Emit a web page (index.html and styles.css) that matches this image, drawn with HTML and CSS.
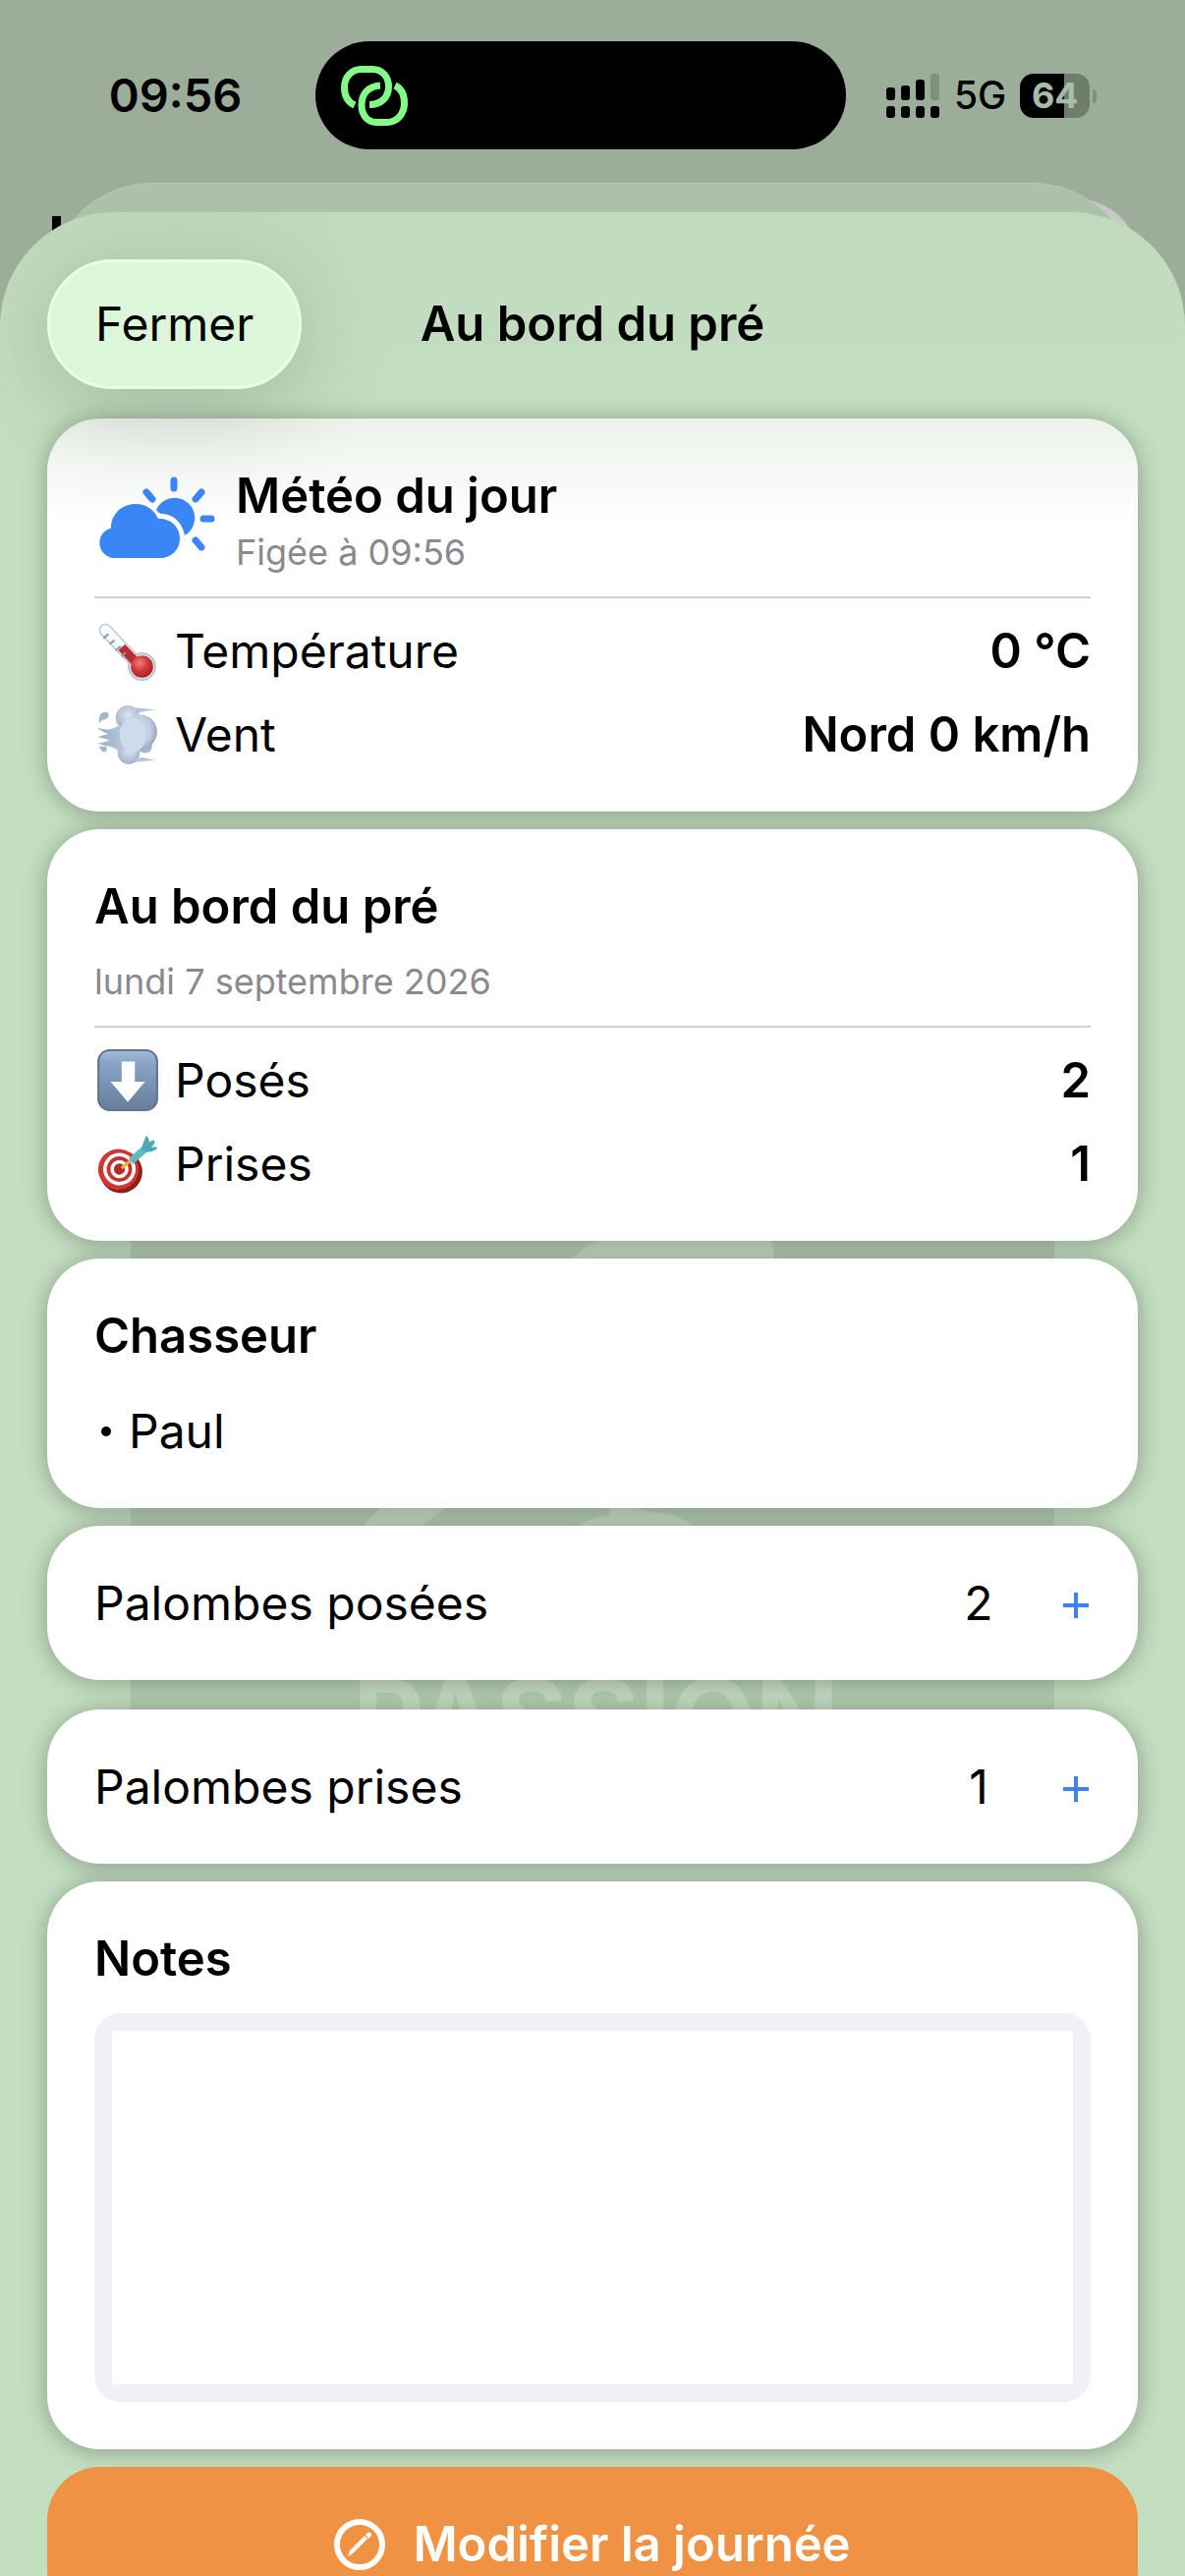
FILE: index.html
```html
<!DOCTYPE html>
<html lang="fr">
<head>
<meta charset="utf-8">
<meta name="viewport" content="width=device-width, initial-scale=1">
<title>Au bord du pré</title>
<link rel="stylesheet" href="styles.css">
</head>
<body>
<div class="backdrop">
  <header class="status">
    <time class="clock">09:56</time>
    <div class="island">
      <svg class="link-icon" viewBox="0 0 68 61" aria-hidden="true">
        <g fill="none" stroke="#83fb86" stroke-width="7" stroke-linejoin="round">
          <path d="M14 40C7 37 3.500 30 3.500 22C3.500 11 11 3.500 21 3.500H32C42 3.500 48.500 11 48.500 21C48.500 32 41 39.500 29 39.500"/>
          <path d="M55 20C61.500 23 64.500 30 64.500 38C64.500 49 57 57.500 47 57.500H36C26 57.500 21 49 21 40C21 28 28 21 40 20"/>
        </g>
      </svg>
    </div>
    <div class="signals">
      <svg class="bars" viewBox="0 0 55 45" aria-hidden="true">
        <rect x="0" y="14" width="9" height="13" rx="3"/><rect x="15" y="12" width="9" height="15" rx="3"/><rect x="30" y="6" width="9" height="21" rx="3"/><rect x="45" y="0" width="9" height="27" rx="3" fill="#7f917d"/>
        <rect x="0" y="33" width="9" height="12" rx="3"/><rect x="15" y="33" width="9" height="12" rx="3"/><rect x="30" y="33" width="9" height="12" rx="3"/><rect x="45" y="33" width="9" height="12" rx="3"/>
      </svg>
      <span class="network">5G</span>
      <span class="battery">64</span>
    </div>
  </header>
  <div class="page-behind"><span class="stub"></span><span class="avatar"></span></div>
  <div class="sheet-behind"></div>
</div>

<main class="sheet">
  <svg class="watermark" viewBox="0 0 940 940" aria-hidden="true">
    <rect width="940" height="940" fill="#b4ceb2"/>
    <g fill="#c6dcc3">
      <path d="M445 335L470 315Q560 255 640 280Q655 310 656 345L650 420H360Z"/>
      <path d="M290 560L253 587L228 612H286L325 582L345 560Z"/>
      <path d="M485 580L488 593Q462 596 450 610V620H585Q570 595 545 592Q525 590 505 583Z"/>
      <text x="226" y="841" font-size="112" font-weight="700">PASSION</text>
    </g>
  </svg>
  <div class="nav">
    <button class="close" type="button">Fermer</button>
    <h1 class="title">Au bord du pré</h1>
  </div>

  <section class="card weather">
    <div class="weather-head">
      <svg class="weather-icon" viewBox="0 0 120 84" aria-hidden="true">
        <g fill="none" stroke="#3b86f7" stroke-width="7" stroke-linecap="round">
          <path d="M77 4V12M49 16L55 23M105 16L99 23M107 43H115M99 65L105 72"/>
        </g>
        <path fill="#3b86f7" d="M59 34A20.500 20.500 0 1 1 88 60C86 48 77 38 64 38Q61 37 59 34Z"/>
        <path fill="#3b86f7" d="M16 83A15.500 15.500 0 0 1 13 52.500C13 38 24 28 38 28C49 28 57 34 61 43C74 42 83 52 83 63C83 75 74 83 63 83Z"/>
      </svg>
      <div class="weather-titles">
        <h2 class="heading">Météo du jour</h2>
        <p class="caption">Figée à 09:56</p>
      </div>
    </div>
    <hr class="rule">
    <dl class="facts">
      <div class="fact">
        <dt><svg class="emoji" viewBox="0 0 64 64" aria-hidden="true">
          <defs>
            <radialGradient id="bulb" cx=".4" cy=".35" r=".7"><stop offset="0" stop-color="#f08078"/><stop offset=".5" stop-color="#d13a3a"/><stop offset="1" stop-color="#9c2226"/></radialGradient>
          </defs>
          <path d="M11 11L46 48" stroke="#bccbd6" stroke-width="13" stroke-linecap="round"/>
          <path d="M11 11L46 48" stroke="#f6fafc" stroke-width="10" stroke-linecap="round"/>
          <circle cx="47" cy="47" r="13" fill="#dfe7ee" stroke="#b9c6d2" stroke-width="2"/>
          <path d="M27 28L46 48" stroke="#b92e2e" stroke-width="9"/>
          <circle cx="47" cy="47" r="11" fill="url(#bulb)"/>
          <path d="M9 19L14 15M15 25L20 21M21 31L26 27M27 37L31 33" stroke="#8e979e" stroke-width="2"/>
        </svg>Température</dt>
        <dd>0 °C</dd>
      </div>
      <div class="fact">
        <dt><svg class="emoji" viewBox="0 0 64 64" aria-hidden="true">
          <defs>
            <radialGradient id="puff-top" cx=".5" cy=".4" r=".6"><stop offset="0" stop-color="#d9e4f1"/><stop offset="1" stop-color="#a3b3cb"/></radialGradient>
            <radialGradient id="puff-mid" cx=".4" cy=".45" r=".6"><stop offset="0" stop-color="#d5e0ee"/><stop offset=".7" stop-color="#c0cee1"/><stop offset="1" stop-color="#96a7c1"/></radialGradient>
            <linearGradient id="trail" x1="0" y1="0" x2="1" y2="0"><stop offset="0" stop-color="#9aabc4"/><stop offset="1" stop-color="#cbd8e8"/></linearGradient>
          </defs>
          <path d="M40 5L60 7L44 10ZM46 54L60 57L40 59Z" fill="#b9c5d6"/>
          <path d="M5 21C3 13 8 8 13 10C16 13 13 17 9 17Q6 18 5 21ZM5 43Q6 49 11 49Q14 46 11 43Q8 44 5 43Z" fill="#a6b6cb"/>
          <circle cx="33" cy="15" r="12" fill="url(#puff-top)"/>
          <circle cx="34" cy="50" r="11" fill="url(#puff-top)"/>
          <circle cx="50" cy="43" r="7" fill="#a3b3cb"/>
          <circle cx="45" cy="29" r="17" fill="url(#puff-mid)"/>
          <path d="M3 25Q15 29 24 23L44 20V42L25 49C18 42 12 44 3 40Q10 40 15 37L3 34L14 31Q7 29 3 25Z" fill="url(#trail)"/>
          <ellipse cx="38" cy="32" rx="13" ry="17" fill="#cfdbea"/>
        </svg>Vent</dt>
        <dd>Nord 0 km/h</dd>
      </div>
    </dl>
  </section>

  <section class="card">
    <h2 class="heading">Au bord du pré</h2>
    <p class="caption date">lundi 7 septembre 2026</p>
    <hr class="rule">
    <dl class="facts">
      <div class="fact">
        <dt><svg class="emoji" viewBox="0 0 64 64" aria-hidden="true">
          <defs>
            <linearGradient id="key" x1="0" y1="0" x2="0" y2="1"><stop offset="0" stop-color="#a7bdd9"/><stop offset=".2" stop-color="#8aa5c9"/><stop offset="1" stop-color="#667d99"/></linearGradient>
          </defs>
          <rect x="4" y="2" width="58" height="59" rx="11" fill="url(#key)" stroke="#62758e" stroke-width="2"/>
          <path fill="#fff" d="M27 13H40V33H50L33 53L16 33H27Z"/>
        </svg>Posés</dt>
        <dd>2</dd>
      </div>
      <div class="fact">
        <dt><svg class="emoji" viewBox="0 0 64 64" aria-hidden="true">
          <g transform="rotate(-12 24 38)">
            <ellipse cx="26" cy="40" rx="21" ry="21" fill="#8e1f1c"/>
            <ellipse cx="24" cy="37" rx="20" ry="20" fill="#cf3730"/>
            <circle cx="25" cy="37" r="16" fill="#fff"/><circle cx="25" cy="37" r="12.500" fill="#c5302b"/>
            <circle cx="25" cy="37" r="9" fill="#fff"/><circle cx="25" cy="37" r="5.500" fill="#b52a28"/>
          </g>
          <path d="M27 36L36 28" stroke="#e0b33c" stroke-width="3"/>
          <path d="M34 26L48 14L53 19L38 32Z" fill="#5fb9c4"/>
          <path d="M46 17L51 4Q54 5 54 10L59 8Q61 12 56 15H62Q63 19 52 20Z" fill="#4fa9b5"/>
        </svg>Prises</dt>
        <dd>1</dd>
      </div>
    </dl>
  </section>

  <section class="card">
    <h2 class="heading">Chasseur</h2>
    <ul class="hunters"><li>Paul</li></ul>
  </section>

  <div class="counters">
    <section class="card counter">
      <span class="counter-label">Palombes posées</span>
      <output class="counter-value">2</output>
      <button class="plus" type="button" aria-label="Ajouter une palombe posée"><svg viewBox="0 0 26 26" aria-hidden="true"><path d="M13 0V26M0 13H26"/></svg></button>
    </section>
    <section class="card counter">
      <span class="counter-label">Palombes prises</span>
      <output class="counter-value">1</output>
      <button class="plus" type="button" aria-label="Ajouter une palombe prise"><svg viewBox="0 0 26 26" aria-hidden="true"><path d="M13 0V26M0 13H26"/></svg></button>
    </section>
  </div>

  <section class="card">
    <label class="heading" for="notes">Notes</label>
    <div class="notes-frame"><textarea id="notes" class="notes"></textarea></div>
  </section>

  <button class="edit" type="button">
    <svg class="edit-icon" viewBox="0 0 52 52" aria-hidden="true">
      <circle cx="26" cy="26" r="23" fill="none" stroke="#fff" stroke-width="6"/>
      <path fill="#fff" d="M14 38L16 32L31 17L34 20L19 35ZM32 16L34 14Q37 13 38 15Q39 17 37 18L35 20Z"/>
    </svg>
    Modifier la journée
  </button>
</main>
</body>
</html>
```
FILE: styles.css
```css
* {
  box-sizing: border-box;
}

html,
body {
  height: 100%;
}

body {
  margin: 0;
  display: flex;
  flex-direction: column;
  overflow: hidden;
  background: #9cae99;
  color: #000;
  font-family: Inter, "Liberation Sans", sans-serif;
  font-size: 48px;
  line-height: 60px;
}

h1,
h2,
p,
dl,
dd,
ul {
  margin: 0;
  padding: 0;
}

button {
  border: 0;
  font: inherit;
  color: inherit;
}

/* Status bar and the layers behind the sheet */

.backdrop {
  position: relative;
  flex: none;
  height: 216px;
}

.status {
  display: grid;
  grid-template-columns: 1fr 540px 1fr;
  align-items: center;
  padding: 42px 36px 0 12px;
}

.clock {
  padding-left: 24px;
  text-align: center;
  font-size: 47px;
  font-weight: 600;
}

.island {
  display: flex;
  align-items: center;
  height: 110px;
  padding-left: 26px;
  border-radius: 55px;
  background: #000;
}

.link-icon {
  width: 68px;
  height: 61px;
}

.signals {
  display: flex;
  align-items: center;
  gap: 14px;
  padding-left: 41px;
}

.bars {
  width: 55px;
  height: 45px;
}

.network {
  font-size: 39px;
  font-weight: 500;
}

.battery {
  position: relative;
  width: 71px;
  height: 45px;
  border-radius: 14px;
  background: linear-gradient(90deg, #000 64%, #6e7e6c 64%);
  color: #a9bca6;
  font-size: 36px;
  font-weight: 700;
  line-height: 45px;
  text-align: center;
}

.battery::after {
  content: "";
  position: absolute;
  left: 74px;
  top: 16px;
  width: 4px;
  height: 14px;
  border-radius: 0 4px 4px 0;
  background: #7f917d;
}

.stub {
  position: absolute;
  left: 53px;
  top: 220px;
  width: 9px;
  height: 20px;
  background: #000;
}

.avatar {
  position: absolute;
  right: 46px;
  top: 202px;
  width: 132px;
  height: 132px;
  border-radius: 50%;
  background: #c9c7c8;
}

.sheet-behind {
  position: absolute;
  left: 48px;
  right: 48px;
  top: 186px;
  height: 200px;
  border-top: 1px solid #b4c9b1;
  border-radius: 108px 108px 0 0;
  background: #abc2a8;
}

/* Sheet */

.sheet {
  position: relative;
  flex: 1 0 auto;
  display: flex;
  flex-direction: column;
  gap: 18px;
  padding: 48px 48px 18px;
  border-radius: 116px 116px 0 0;
  background: linear-gradient(#c1dabd, #c3dfc0 220px);
  overflow: hidden;
}

.watermark {
  position: absolute;
  left: 50%;
  top: 733px;
  width: 940px;
  height: 940px;
  margin-left: -470px;
}

.nav {
  position: relative;
  z-index: 2;
  display: grid;
  grid-template-columns: 1fr auto 1fr;
  align-items: center;
  margin-bottom: 12px;
}

.close {
  justify-self: start;
  height: 132px;
  padding: 0 46px;
  border: 3px solid #e8ffe5;
  border-radius: 66px;
  background: #dbf6d9;
  box-shadow: 0 18px 100px rgba(0, 0, 0, .18);
}

.title {
  font-size: 49px;
  font-weight: 600;
}

.card {
  position: relative;
  padding: 48px;
  border-radius: 54px;
  background: #fff;
  box-shadow: 0 2px 24px rgba(0, 0, 0, .3);
}

.heading {
  display: block;
  font-size: 49px;
  font-weight: 600;
  line-height: 62px;
}

.caption {
  color: #8a8a8e;
  font-size: 36px;
  line-height: 48px;
}

.date {
  margin-top: 21px;
}

.rule {
  height: 2px;
  margin: 21px 0 24px;
  border: 0;
  background: #d0d0d2;
}

/* Weather */

.weather {
  background: linear-gradient(#edf2eb, #fff 110px);
}

.weather-head {
  display: flex;
  align-items: center;
  gap: 20px;
  padding-left: 4px;
}

.weather-titles {
  display: flex;
  flex-direction: column;
  gap: 2px;
}

.weather-icon {
  width: 120px;
  height: 84px;
  margin-bottom: 6px;
}

.facts {
  display: flex;
  flex-direction: column;
  gap: 25px;
}

.fact {
  display: flex;
  justify-content: space-between;
}

.fact dt {
  display: flex;
  align-items: center;
  gap: 16px;
}

.fact dd {
  font-size: 49px;
  font-weight: 600;
}

.emoji {
  width: 66px;
  height: 66px;
  margin: -4px 0;
}

/* Hunters */

.hunters {
  margin-top: 36px;
  list-style: none;
}

.hunters li {
  display: flex;
  align-items: center;
  gap: 18px;
  padding-left: 7px;
}

.hunters li::before {
  content: "";
  width: 10px;
  height: 10px;
  border-radius: 50%;
  background: #000;
}

/* Counters */

.counters {
  display: flex;
  flex-direction: column;
  gap: 30px;
}

.counter {
  display: flex;
  align-items: center;
  min-height: 157px;
}

.counter-label {
  flex: 1;
}

.counter-value {
  width: 72px;
  text-align: center;
}

.plus {
  display: flex;
  margin-left: 48px;
  padding: 4px 2px 0;
  background: none;
}

.plus svg {
  width: 26px;
  height: 26px;
  fill: none;
  stroke: #3b82f6;
  stroke-width: 4;
}

/* Notes */

.notes-frame {
  margin-top: 24px;
  padding: 18px;
  border-radius: 27px;
  background: #f1f0f6;
}

.notes {
  display: block;
  width: 100%;
  height: 360px;
  border: 0;
  background: #fff;
  font: inherit;
  resize: none;
}

.edit {
  position: relative;
  display: flex;
  align-items: center;
  justify-content: center;
  gap: 28px;
  height: 158px;
  border-radius: 54px;
  background: #ef9243;
  color: #fff;
  font-size: 49px;
  font-weight: 600;
}

.edit-icon {
  width: 52px;
  height: 52px;
}
```
